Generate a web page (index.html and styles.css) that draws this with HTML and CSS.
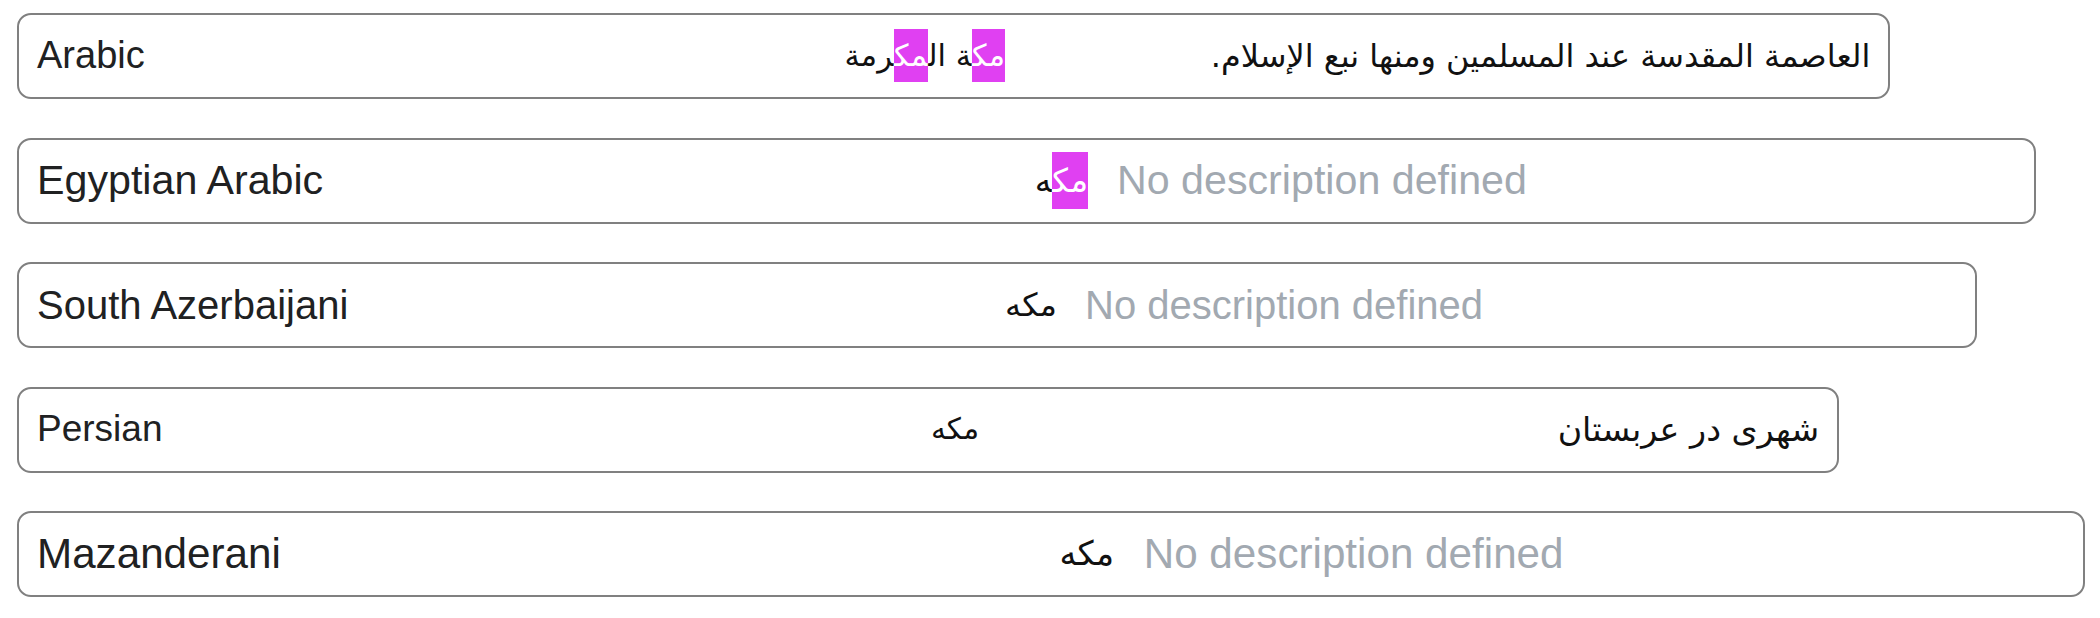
FILE: index.html
```html
<!DOCTYPE html>
<html lang="en">
<head>
<meta charset="utf-8">
<title>Labels</title>
<link rel="stylesheet" href="styles.css">
</head>
<body>
<div class="list">
  <div class="entry entry--ar">
    <div class="entry__label">Arabic</div>
    <div class="entry__lemma" dir="rtl" lang="ar"><span class="hl">مك</span>ة ال<span class="hl">مك</span>رمة</div>
    <div class="entry__desc entry__desc--rtl" dir="rtl" lang="ar">العاصمة المقدسة عند المسلمين ومنها نبع الإسلام.</div>
  </div>
  <div class="entry entry--arz">
    <div class="entry__label">Egyptian Arabic</div>
    <div class="entry__lemma" dir="rtl" lang="arz"><span class="hl">مك</span>ه</div>
    <div class="entry__desc entry__desc--empty">No description defined</div>
  </div>
  <div class="entry entry--azb">
    <div class="entry__label">South Azerbaijani</div>
    <div class="entry__lemma" dir="rtl" lang="azb">مکه</div>
    <div class="entry__desc entry__desc--empty">No description defined</div>
  </div>
  <div class="entry entry--fa">
    <div class="entry__label">Persian</div>
    <div class="entry__lemma" dir="rtl" lang="fa">مکه</div>
    <div class="entry__desc entry__desc--rtl" dir="rtl" lang="fa">شهری در عربستان</div>
  </div>
  <div class="entry entry--mzn">
    <div class="entry__label">Mazanderani</div>
    <div class="entry__lemma" dir="rtl" lang="mzn">مکه</div>
    <div class="entry__desc entry__desc--empty">No description defined</div>
  </div>
</div>
</body>
</html>
```

FILE: styles.css
```css
html, body {
  margin: 0;
  padding: 0;
  background: #ffffff;
}

body {
  font-family: "Liberation Sans", Arial, sans-serif;
  color: #202122;
}

.list {
  display: flex;
  flex-direction: column;
  align-items: flex-start;
  gap: 38.5px;
  padding: 13px 0 0 17px;
}

.entry {
  display: grid;
  grid-template-columns: calc(13em - 20px) 13em 1fr;
  align-items: center;
  box-sizing: border-box;
  width: 49em;
  height: 86px;
  padding: 0 18px;
  border: 2px solid #808080;
  border-radius: 14px;
  line-height: 1.2;
}

.entry--ar { font-size: 38px; width: 49.3em; }
.entry--arz { font-size: 41.2px; }
.entry--azb { font-size: 40px; }
.entry--fa { font-size: 37px; width: 49.25em; }
.entry--mzn { font-size: 42.2px; }

.entry__label {
  color: #202122;
  white-space: nowrap;
}

.entry__lemma {
  font-family: "DejaVu Sans", sans-serif;
  font-size: 0.8em;
  text-align: right;
  color: #111111;
  white-space: nowrap;
}

.entry__desc {
  margin-left: 0.7em;
  white-space: nowrap;
}

.entry__desc--rtl {
  font-family: "DejaVu Sans", sans-serif;
  font-size: 0.84em;
  text-align: right;
  color: #111111;
}

.entry--fa .entry__desc--rtl {
  font-size: 0.9em;
}

.entry__desc--empty {
  color: #a2a9b1;
}

.hl {
  background: #e040f2;
  color: #ffffff;
  padding: 9px 0;
}
```
